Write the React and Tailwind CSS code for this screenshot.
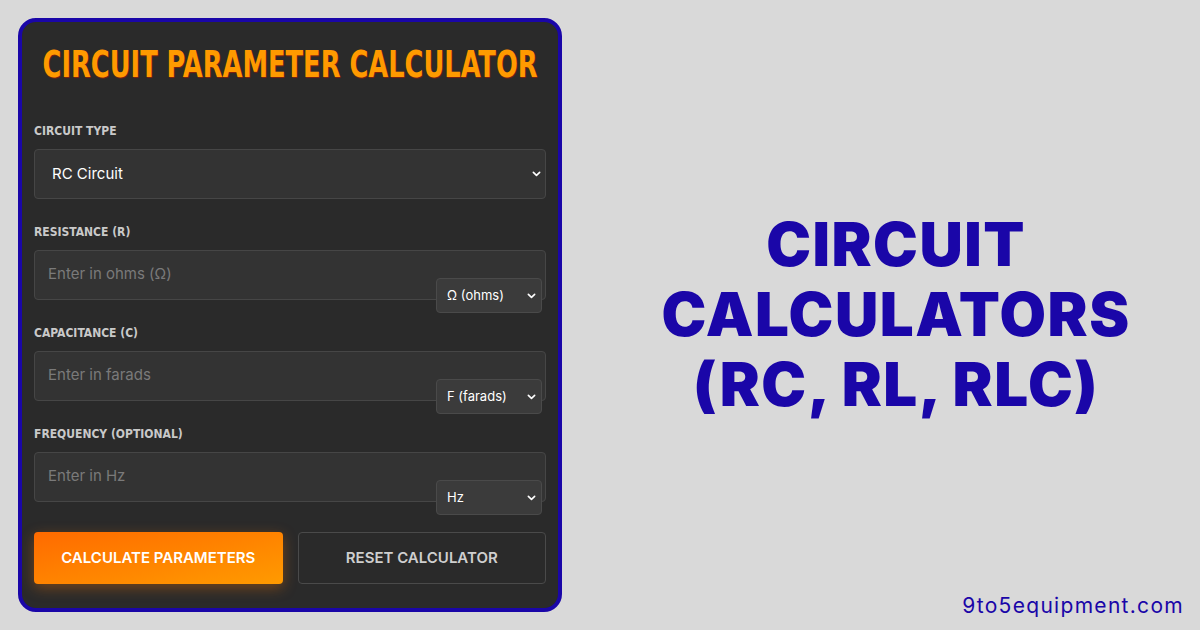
import React from "react";

const narrow = { fontFamily: "'DejaVu Sans Condensed','DejaVu Sans',sans-serif", fontStretch: "condensed" };

function Chevron({ className }) {
  return (
    <svg viewBox="0 0 10 6" className={className} fill="none" stroke="currentColor" strokeWidth="1.8" strokeLinecap="round" strokeLinejoin="round">
      <path d="M1.5 1.2 L5 4.6 L8.5 1.2" />
    </svg>
  );
}

function Label({ children }) {
  return (
    <div className="text-[12px] font-bold leading-4 text-[#c9c9c9] mb-[10px]" style={narrow}>
      {children}
    </div>
  );
}

function Field({ label, placeholder, unit }) {
  return (
    <div className="mb-[25px]">
      <Label>{label}</Label>
      <div className="relative">
        <input
          placeholder={placeholder}
          className="w-full h-[50px] rounded-[4px] border border-[#464646] bg-[#333333] pl-[13px] pb-[4px] text-[15px] text-white placeholder:text-[#7a7a7a] outline-none"
        />
        <div className="absolute right-[4px] top-[28px] flex h-[35px] w-[106px] items-center justify-between rounded-[4px] border border-[#4a4a4a] bg-[#3b3b3b] pl-[10px] pr-[5px] text-[13px] text-white">
          <span>{unit}</span>
          <Chevron className="w-[9px] h-[6px] text-white" />
        </div>
      </div>
    </div>
  );
}

export default function App() {
  return (
    <div className="flex h-[630px] w-[1200px] bg-[#d9d9d9]" style={{ fontFamily: "Inter, 'Open Sans', sans-serif" }}>
      <div className="p-[18px] pr-0">
        <div className="w-[544px] h-[594px] rounded-[18px] border-[4px] border-[#1a06a8] bg-[#2a2a2a] px-[12px] pt-[18px]">
          <h1 className="flex justify-center mb-[35px]">
            <span
              className="inline-block whitespace-nowrap scale-x-[0.752] text-[38px] font-bold leading-[48px] text-[#ff9a00] [text-shadow:1px_1px_1px_rgba(170,30,0,0.7)]"
              style={narrow}
            >
              CIRCUIT PARAMETER CALCULATOR
            </span>
          </h1>

          <div className="mb-[25px]">
            <Label>CIRCUIT TYPE</Label>
            <div className="flex h-[50px] items-center justify-between rounded-[4px] border border-[#464646] bg-[#333333] pl-[17px] pr-[4px] text-[15px] text-white">
              <span>RC Circuit</span>
              <Chevron className="w-[9px] h-[6px] text-white" />
            </div>
          </div>

          <Field label="RESISTANCE (R)" placeholder="Enter in ohms (Ω)" unit="Ω (ohms)" />
          <Field label="CAPACITANCE (C)" placeholder="Enter in farads" unit="F (farads)" />
          <Field label="FREQUENCY (OPTIONAL)" placeholder="Enter in Hz" unit="Hz" />

          <div className="mt-[30px] grid grid-cols-2 gap-[15px]">
            <button className="h-[52px] rounded-[4px] bg-gradient-to-br from-[#ff6a00] to-[#ff9a00] text-[15px] font-semibold text-white shadow-[0_4px_14px_rgba(255,120,0,0.35)]">
              CALCULATE PARAMETERS
            </button>
            <button className="h-[52px] rounded-[4px] border border-[#4a4a4a] bg-[#2a2a2a] text-[15px] font-semibold text-[#cfcfcf]">
              RESET CALCULATOR
            </button>
          </div>
        </div>
      </div>

      <div className="flex flex-1 flex-col pl-[46px] pr-[16px]">
        <div className="flex flex-1 items-center justify-center pt-[34px]">
          <h2 className="text-center text-[60px] font-black leading-[70px] tracking-[1.5px] text-[#1a06a8]">
            CIRCUIT
            <br />
            CALCULATORS
            <br />
            (RC, RL, RLC)
          </h2>
        </div>
        <div className="text-right text-[21px] leading-6 tracking-[1.3px] text-[#1a06a8] pb-[12px]">9to5equipment.com</div>
      </div>
    </div>
  );
}
